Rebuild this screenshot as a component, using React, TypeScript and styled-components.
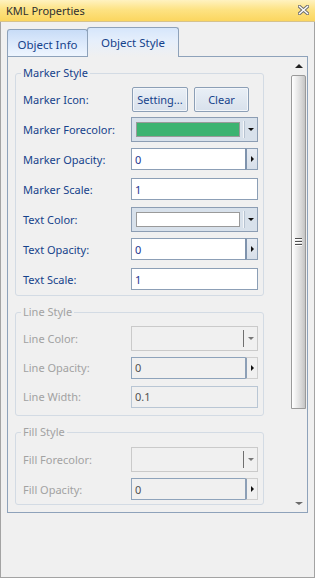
import * as React from 'react';
import styled, { createGlobalStyle, css } from 'styled-components';

const GlobalStyle = createGlobalStyle`
  html, body {
    margin: 0;
    padding: 0;
    background: #f0f0f0;
  }
  * {
    box-sizing: border-box;
  }
`;

const FONT = `'Noto Sans', 'DejaVu Sans', sans-serif`;
const BLUE = '#15428b';
const GRAY_TEXT = '#a2a2a2';

const Window = styled.div`
  width: 315px;
  height: 578px;
  display: flex;
  flex-direction: column;
  background: #f0f0f0;
  border: 1px solid #a3a3a3;
  border-top: none;
  font-family: ${FONT};
  font-size: 11px;
`;

const TitleBar = styled.div`
  height: 22px;
  flex: none;
  display: flex;
  align-items: center;
  justify-content: space-between;
  padding: 0 6px 1px 6px;
  margin: 0 -1px;
  background: linear-gradient(#fff2c0 0%, #fde384 45%, #fbd65f 100%);
  border-bottom: 1px solid #d6c28c;
  color: #2f2f2f;
  font-size: 11px;
`;

const CloseIcon = () => (
  <svg width="11" height="10" viewBox="0 0 11 10">
    <path d="M1.5 1.5 L9.5 8.5 M9.5 1.5 L1.5 8.5" stroke="#6f6f6f" strokeWidth="3.4" strokeLinecap="square" />
    <path d="M1.5 1.5 L9.5 8.5 M9.5 1.5 L1.5 8.5" stroke="#ffffff" strokeWidth="1.4" strokeLinecap="square" />
  </svg>
);

const Body = styled.div`
  flex: 1;
  padding: 5px 6px 0 6px;
  display: flex;
  flex-direction: column;
`;

const TabStrip = styled.div`
  display: flex;
  align-items: flex-end;
  height: 30px;
  margin-bottom: -1px;
  position: relative;
  z-index: 1;
`;

const Tab = styled.div<{ $active?: boolean }>`
  display: flex;
  align-items: center;
  justify-content: center;
  border: 1px solid #8ea2ba;
  border-bottom: none;
  border-radius: 3px 3px 0 0;
  color: ${BLUE};
  font-size: 11.5px;
  ${(p) =>
    p.$active
      ? css`
          width: 92px;
          height: 30px;
          padding-bottom: 1px;
          background: linear-gradient(#d6e6fb 0%, #e6effb 45%, #f0f0f0 100%);
        `
      : css`
          width: 81px;
          height: 27px;
          margin-bottom: 1px;
          margin-right: -1px;
          padding-top: 2px;
          background: linear-gradient(#c8dcf7 0%, #dae8fb 45%, #eef5fe 100%);
        `}
`;

const Panel = styled.div`
  height: 457px;
  display: flex;
  border: 1px solid #8ea2ba;
`;

const Content = styled.div`
  flex: 1;
  overflow: hidden;
  padding-left: 7px;
`;

const Group = styled.fieldset<{ $pt: number; $pb: number }>`
  width: 249px;
  margin: 8px 0 0 0;
  padding: ${(p) => p.$pt}px 5px ${(p) => p.$pb}px 7px;
  border: 1px solid #d3dbe4;
  border-radius: 3px;
`;

const Legend = styled.legend<{ $disabled?: boolean }>`
  padding: 0 2px;
  margin-left: -2px;
  line-height: 16px;
  font-size: 11px;
  color: ${(p) => (p.$disabled ? GRAY_TEXT : BLUE)};
`;

const Row = styled.div<{ $h: number }>`
  display: grid;
  grid-template-columns: 108px 127px;
  align-items: center;
  height: ${(p) => p.$h}px;
`;

const Label = styled.span<{ $disabled?: boolean }>`
  color: ${(p) => (p.$disabled ? GRAY_TEXT : BLUE)};
  font-size: 11px;
  white-space: nowrap;
`;

const ButtonPair = styled.div`
  display: flex;
  gap: 6px;
  padding-left: 1px;
`;

const Button = styled.div<{ $w: number }>`
  width: ${(p) => p.$w}px;
  height: 25px;
  display: flex;
  align-items: center;
  justify-content: center;
  border: 1px solid #8c9fb6;
  border-radius: 2px;
  box-shadow: inset 0 0 0 1px #f3f6fa;
  background: linear-gradient(#e9eff6, #d8e1ec);
  color: ${BLUE};
  font-size: 11px;
`;

const Combo = styled.div<{ $disabled?: boolean }>`
  width: 127px;
  height: 25px;
  display: flex;
  align-items: center;
  padding-left: 4px;
  border: 1px solid ${(p) => (p.$disabled ? '#cacaca' : '#8c9db3')};
  background: ${(p) => (p.$disabled ? '#f0f0f0' : '#d8e1eb')};
`;

const Swatch = styled.div<{ $color: string }>`
  width: 104px;
  height: 15px;
  border: 1px solid #9a9a9a;
  background: ${(p) => p.$color};
`;

const SwatchSpacer = styled.div`
  width: 104px;
  height: 15px;
`;

const ComboDivider = styled.div<{ $disabled?: boolean }>`
  width: 1px;
  height: 17px;
  margin-left: 3px;
  background: ${(p) => (p.$disabled ? '#6f6f6f' : '#f4f6f9')};
  box-shadow: ${(p) => (p.$disabled ? 'none' : '1px 0 0 #b8c4d2')};
`;

const ComboArrow = styled.div<{ $disabled?: boolean }>`
  flex: 1;
  display: flex;
  justify-content: center;
  &::after {
    content: '';
    border-left: 3px solid transparent;
    border-right: 3px solid transparent;
    border-top: 3px solid ${(p) => (p.$disabled ? '#777' : '#111')};
  }
`;

const InputBox = styled.div<{ $disabled?: boolean; $border?: string }>`
  width: 127px;
  height: 22px;
  display: flex;
  align-items: center;
  padding-left: 3px;
  border: 1px solid ${(p) => p.$border || '#8c9fb6'};
  background: ${(p) => (p.$disabled ? '#f0f0f0' : '#ffffff')};
  color: ${(p) => (p.$disabled ? '#505050' : '#24368f')};
  font-size: 11px;
`;

const SpinWrap = styled.div`
  width: 127px;
  height: 22px;
  display: flex;
`;

const SpinInput = styled(InputBox)`
  width: auto;
  flex: 1;
  border-right: none;
`;

const SpinButton = styled.div<{ $disabled?: boolean }>`
  width: 13px;
  display: flex;
  align-items: center;
  justify-content: center;
  border: 1px solid ${(p) => (p.$disabled ? '#cfcfcf' : '#8c9fb6')};
  border-left: 2px solid ${(p) => (p.$disabled ? '#8c9fb6' : '#7f93ad')};
  background: ${(p) => (p.$disabled ? '#f0f0f0' : 'linear-gradient(#e6ebf2, #d7dfe9)')};
  &::after {
    content: '';
    border-top: 3px solid transparent;
    border-bottom: 3px solid transparent;
    border-left: 3px solid #111;
  }
`;

const ScrollBar = styled.div`
  width: 16px;
  display: flex;
  flex-direction: column;
  background: #f0f0f0;
`;

const ScrollArrow = styled.div<{ $down?: boolean }>`
  height: 17px;
  display: flex;
  align-items: center;
  justify-content: center;
  &::after {
    content: '';
    border-left: 4px solid transparent;
    border-right: 4px solid transparent;
    ${(p) =>
      p.$down
        ? css`
            border-top: 3px solid #6a6a6a;
          `
        : css`
            border-bottom: 4px solid #222;
          `}
  }
`;

const Track = styled.div`
  flex: 1;
  padding-top: 1px;
`;

const Thumb = styled.div`
  width: 15px;
  height: 334px;
  display: flex;
  align-items: center;
  justify-content: center;
  border: 1px solid #9a9a9a;
  border-radius: 2px 2px 0 0;
  background: linear-gradient(90deg, #ffffff 0%, #f2f2f2 25%, #d6d6d6 75%, #c4c4c4 100%);
`;

const Grip = styled.div`
  width: 7px;
  height: 8px;
  background: repeating-linear-gradient(#4f4f4f 0 1px, #ffffff 1px 2px, transparent 2px 3px);
`;

type FieldProps = { label: string; disabled?: boolean; h: number; children: React.ReactNode };

const Field = ({ label, disabled, h, children }: FieldProps) => (
  <Row $h={h}>
    <Label $disabled={disabled}>{label}</Label>
    {children}
  </Row>
);

const ColorCombo = ({ color, disabled }: { color?: string; disabled?: boolean }) => (
  <Combo $disabled={disabled}>
    {color ? <Swatch $color={color} /> : <SwatchSpacer />}
    <ComboDivider $disabled={disabled} />
    <ComboArrow $disabled={disabled} />
  </Combo>
);

const SpinField = ({ value, disabled }: { value: string; disabled?: boolean }) => (
  <SpinWrap>
    <SpinInput $disabled={disabled} $border={disabled ? '#8ea3bb' : undefined}>
      {value}
    </SpinInput>
    <SpinButton $disabled={disabled} />
  </SpinWrap>
);

export default function App() {
  return (
    <>
      <GlobalStyle />
      <Window>
        <TitleBar>
          <span>KML Properties</span>
          <CloseIcon />
        </TitleBar>
        <Body>
          <TabStrip>
            <Tab>Object Info</Tab>
            <Tab $active>Object Style</Tab>
          </TabStrip>
          <Panel>
            <Content>
              <Group $pt={3} $pb={1}>
                <Legend>Marker Style</Legend>
                <Field label="Marker Icon:" h={30}>
                  <ButtonPair>
                    <Button $w={56}>Setting...</Button>
                    <Button $w={55}>Clear</Button>
                  </ButtonPair>
                </Field>
                <Field label="Marker Forecolor:" h={30}>
                  <ColorCombo color="#3cb371" />
                </Field>
                <Field label="Marker Opacity:" h={30}>
                  <SpinField value="0" />
                </Field>
                <Field label="Marker Scale:" h={30}>
                  <InputBox>1</InputBox>
                </Field>
                <Field label="Text Color:" h={30}>
                  <ColorCombo color="#ffffff" />
                </Field>
                <Field label="Text Opacity:" h={30}>
                  <SpinField value="0" />
                </Field>
                <Field label="Text Scale:" h={30}>
                  <InputBox>1</InputBox>
                </Field>
              </Group>

              <Group $pt={4} $pb={4}>
                <Legend $disabled>Line Style</Legend>
                <Field label="Line Color:" h={29} disabled>
                  <ColorCombo disabled />
                </Field>
                <Field label="Line Opacity:" h={29} disabled>
                  <SpinField value="0" disabled />
                </Field>
                <Field label="Line Width:" h={29} disabled>
                  <InputBox $disabled $border="#b9c6d4">0.1</InputBox>
                </Field>
              </Group>

              <Group $pt={4} $pb={0}>
                <Legend $disabled>Fill Style</Legend>
                <Field label="Fill Forecolor:" h={30} disabled>
                  <ColorCombo disabled />
                </Field>
                <Field label="Fill Opacity:" h={30} disabled>
                  <SpinField value="0" disabled />
                </Field>
              </Group>
            </Content>
            <ScrollBar>
              <ScrollArrow />
              <Track>
                <Thumb>
                  <Grip />
                </Thumb>
              </Track>
              <ScrollArrow $down />
            </ScrollBar>
          </Panel>
        </Body>
      </Window>
    </>
  );
}
